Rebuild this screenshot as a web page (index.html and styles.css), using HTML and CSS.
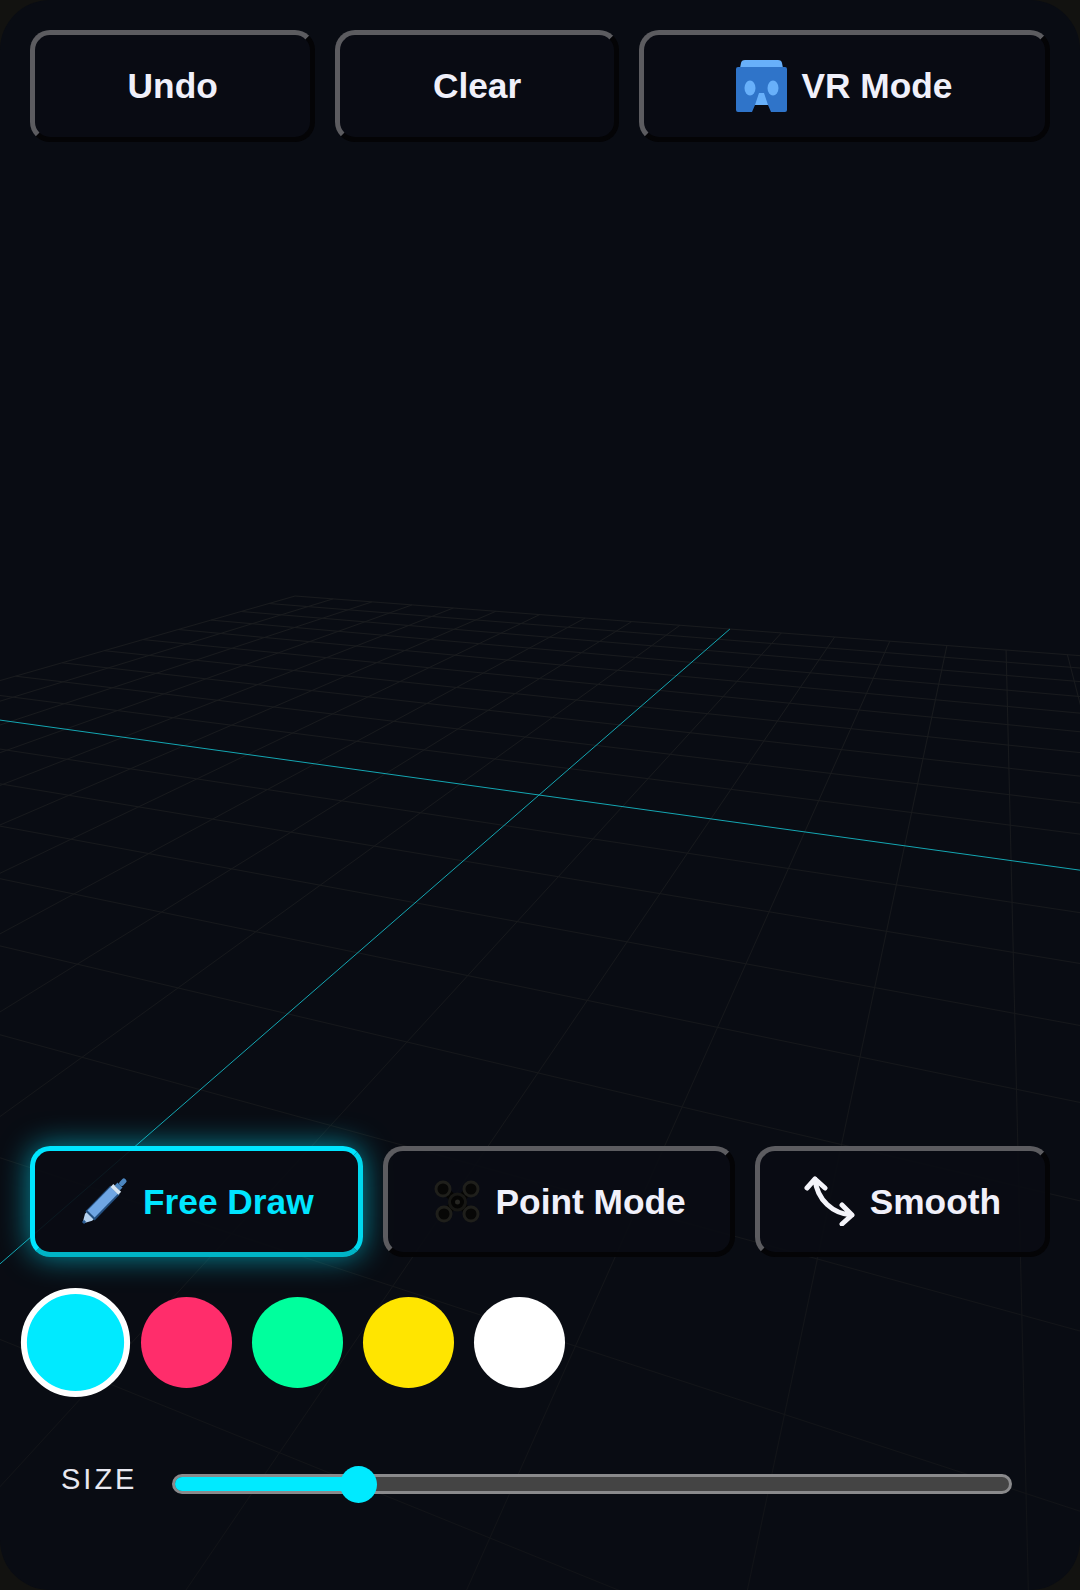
FILE: index.html
```html
<!DOCTYPE html>
<html lang="en">
<head>
<meta charset="utf-8">
<title>VR Draw</title>
<link rel="stylesheet" href="styles.css">
</head>
<body>
<main class="app">
  <svg class="scene" id="scene" viewBox="0 0 1080 1590" aria-hidden="true">
    <defs>
      <linearGradient id="gridFade" gradientUnits="userSpaceOnUse" x1="0" y1="590" x2="0" y2="1590">
        <stop offset="0" stop-color="#191b1e"/>
        <stop offset="1" stop-color="#111317"/>
      </linearGradient>
    </defs>
  </svg>

  <div class="btn-row btn-row-top">
    <button class="btn">Undo</button>
    <button class="btn">Clear</button>
    <button class="btn">
      <svg class="icon icon-vr" viewBox="0 0 51 52">
        <path class="vr-light" d="M4 8 L5 3 Q5.500 0 9 0 H42 Q45.500 0 46 3 L47 8 Z"/>
        <path class="vr-body" d="M0 9 Q0 7 2 7 H49 Q51 7 51 9 V50 Q51 52 49 52 H35 L32 45 H19 L16 52 H2 Q0 52 0 50 Z"/>
        <ellipse class="vr-light" cx="14" cy="28" rx="5.500" ry="7.500"/>
        <ellipse class="vr-light" cx="37" cy="28" rx="5.500" ry="7.500"/>
        <path class="vr-light" d="M23 33 H28 L32 45 H19 Z"/>
      </svg>
      VR Mode
    </button>
  </div>

  <div class="spacer"></div>

  <div class="btn-row btn-row-bottom">
    <button class="btn btn-active">
      <svg class="icon" viewBox="0 0 50 50">
        <g transform="translate(4 46) rotate(-45.700)">
          <rect class="pen-edge" x="10" y="-6.500" width="36" height="13"/>
          <path class="pen-tip" d="M1 -1 L8 -5 H11 V5 H8 L1 1 Z"/>
          <rect class="pen-point" x="0" y="-1.500" width="3" height="3"/>
          <rect class="pen-collar" x="10" y="-5.500" width="2" height="11"/>
          <rect class="pen-body" x="12" y="-5.500" width="33" height="10"/>
          <rect class="pen-band" x="45" y="-5.500" width="4" height="11"/>
          <rect class="pen-neck" x="49" y="-3.500" width="4" height="7"/>
          <rect class="pen-neck" x="53" y="-2.500" width="8" height="5" rx="2"/>
        </g>
      </svg>
      Free Draw
    </button>
    <button class="btn">
      <svg class="icon" viewBox="0 0 50 50">
        <path class="drone-arm" d="M11 12 L39 37 M39 12 L12 37"/>
        <circle class="drone-rotor" cx="11" cy="12" r="7"/>
        <circle class="drone-rotor" cx="39" cy="12" r="7"/>
        <circle class="drone-rotor" cx="12" cy="37" r="7"/>
        <circle class="drone-rotor" cx="39" cy="37" r="7"/>
        <circle class="drone-hub" cx="25.500" cy="25" r="8"/>
        <circle class="drone-eye" cx="25.500" cy="25" r="2.500"/>
      </svg>
      Point Mode
    </button>
    <button class="btn">
      <svg class="icon icon-smooth" viewBox="0 0 52 50">
        <path class="arrow" d="M3 12 L11 3 L21 12 M11 3 C13 24 29 38 48 39 M38 29 L48 39 L38 48"/>
      </svg>
      Smooth
    </button>
  </div>

  <div class="swatches">
    <span class="swatch swatch-cyan swatch-selected"></span>
    <span class="swatch swatch-pink"></span>
    <span class="swatch swatch-green"></span>
    <span class="swatch swatch-yellow"></span>
    <span class="swatch swatch-white"></span>
  </div>

  <div class="size-row">
    <span class="size-label">SIZE</span>
    <div class="slider">
      <div class="slider-fill" style="width:22%"><span class="slider-thumb"></span></div>
    </div>
  </div>
</main>
<script src="grid.js"></script>
</body>
</html>
```
FILE: styles.css
```css
* { box-sizing: border-box; }

html, body {
  margin: 0;
  padding: 0;
  background: #121210;
}

.app {
  position: relative;
  width: 1080px;
  height: 1590px;
  padding: 30px 30px 87px 30px;
  display: flex;
  flex-direction: column;
  overflow: hidden;
  border-radius: 50px;
  background: #090c13;
  font-family: "Liberation Sans", Arial, sans-serif;
}

.scene {
  position: absolute;
  left: 0;
  top: 0;
  width: 1080px;
  height: 1590px;
}

.grid-line { stroke: url(#gridFade); stroke-width: 1; }
.axis-line { stroke: #14a6b2; stroke-width: 1; }

.btn-row {
  position: relative;
  display: flex;
  gap: 20px;
}

.btn-row-top { height: 112px; }
.btn-row-bottom { height: 111px; }

.spacer { flex: 1; }

.btn {
  flex: 1 1 auto;
  display: flex;
  align-items: center;
  justify-content: center;
  gap: 14px;
  padding: 0;
  border-width: 5px;
  border-style: solid;
  border-color: #5c5c60 #040406 #040406 #5c5c60;
  border-radius: 20px;
  background: rgba(10, 12, 20, 0.92);
  color: #f0f0fa;
  font: bold 35.300px "Liberation Sans", Arial, sans-serif;
}

.btn-active {
  border-color: #00e5ff #00d8ee #00b4c6 #00e5ff;
  color: #00e5ff;
  box-shadow: 0 0 30px rgba(0, 229, 255, 0.6);
}

.icon {
  width: 50px;
  height: 50px;
  flex: none;
}

.icon-vr { width: 51px; height: 52px; }
.icon-smooth { width: 52px; height: 50px; margin-bottom: 2px; }

.vr-light { fill: #68b0fa; }
.vr-body { fill: #2f74c9; }

.pen-edge { fill: #234e7e; }
.pen-tip { fill: #b6d2ee; }
.pen-point { fill: #2c5d94; }
.pen-collar { fill: #24507f; }
.pen-body { fill: #6fa6e4; }
.pen-band { fill: #d5e4f2; }
.pen-neck { fill: #4c86c0; }

.drone-arm { stroke: #050504; stroke-width: 8; fill: none; }
.drone-rotor { fill: #070706; stroke: #1f1f1b; stroke-width: 3; }
.drone-hub { fill: #050504; stroke: #171714; stroke-width: 3; }
.drone-eye { fill: #262622; }

.arrow {
  fill: none;
  stroke: #f4f4fa;
  stroke-width: 5;
  stroke-linecap: round;
  stroke-linejoin: round;
}

.swatches {
  position: relative;
  display: flex;
  gap: 20px;
  margin-top: 40px;
}

.swatch {
  width: 91px;
  height: 91px;
  border-radius: 50%;
}

.swatch-cyan { background: #00eaff; }
.swatch-pink { background: #ff2d6b; }
.swatch-green { background: #00ff9d; }
.swatch-yellow { background: #ffe500; }
.swatch-white { background: #ffffff; }

.swatch-selected {
  border: 5px solid #ffffff;
  transform: scale(1.2);
}

.size-row {
  position: relative;
  display: flex;
  align-items: center;
  gap: 35px;
  height: 38px;
  margin: 77px 38px 0 31px;
}

.size-label {
  margin-bottom: 10px;
  color: #e8e8f0;
  font-size: 29px;
  letter-spacing: 3px;
}

.slider {
  flex: 1;
  height: 20px;
  border: 3px solid #8a8a8c;
  border-radius: 10px;
  background: #444444;
}

.slider-fill {
  position: relative;
  height: 100%;
  border-radius: 8px 0 0 8px;
  background: #00eaff;
}

.slider-thumb {
  position: absolute;
  right: -18px;
  top: 50%;
  width: 37px;
  height: 37px;
  margin-top: -18.500px;
  border-radius: 50%;
  background: #00eaff;
}
```
FILE: grid.js
```js
// Perspective floor grid: a 20x20 grid seen through a homography.
(function () {
  var NS = 'http://www.w3.org/2000/svg';
  var scene = document.getElementById('scene');
  var O = [539, 795];
  var VU = [-2325, 397];
  var VV = [1000, 394];
  var G = -0.0283;
  var H = -0.0706;

  function project(u, v) {
    var a = G * u;
    var b = H * v;
    var w = 1 + a + b;
    return [(a * VU[0] + b * VV[0] + O[0]) / w, (a * VU[1] + b * VV[1] + O[1]) / w];
  }

  function addLine(u1, v1, u2, v2, cls) {
    var p = project(u1, v1);
    var q = project(u2, v2);
    var el = document.createElementNS(NS, 'line');
    el.setAttribute('x1', p[0].toFixed(1));
    el.setAttribute('y1', p[1].toFixed(1));
    el.setAttribute('x2', q[0].toFixed(1));
    el.setAttribute('y2', q[1].toFixed(1));
    el.setAttribute('class', cls);
    scene.appendChild(el);
  }

  for (var i = -10; i <= 10; i++) {
    if (i === 0) continue;
    addLine(i, -10, i, 10, 'grid-line');
    addLine(-10, i, 10, i, 'grid-line');
  }
  addLine(0, -10, 0, 10, 'axis-line');
  addLine(-10, 0, 10, 0, 'axis-line');
})();
```
